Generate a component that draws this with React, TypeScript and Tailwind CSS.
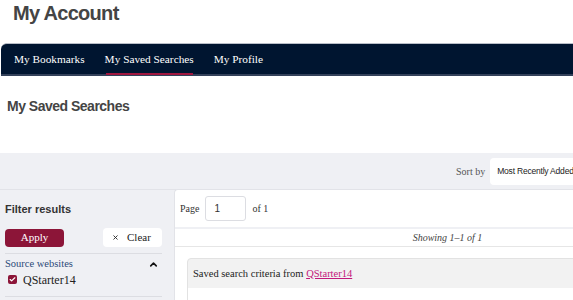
import { ChevronUp, Check, X } from 'lucide-react';

const serif = { fontFamily: '"Liberation Serif", "DejaVu Serif", serif' };

const tabs = ['My Bookmarks', 'My Saved Searches', 'My Profile'];

const App = () => {
  return (
    <div className="w-full overflow-hidden bg-white" style={{ fontFamily: '"Liberation Sans", Arial, sans-serif' }}>
      <div className="w-[720px]">
        <h1 className="px-[13px] text-[20px] font-bold leading-[26px] tracking-[-0.7px] text-[#444]">My Account</h1>

        {/* tabs */}
        <nav className="mt-[17px] ml-[1px] flex h-[33px] gap-[20px] rounded-tl-md border-t border-[#b9bec8] border-b-2 border-b-[#33415a] bg-[#001530] pl-[13px] pt-[1px]" style={serif}>
          {tabs.map((t, i) => (
            <div key={t} className="relative flex items-center text-[11.3px] text-white">
              {t}
              {i === 1 && <span className="absolute bottom-[-1px] left-[1px] right-[1px] h-[2px] bg-[#a1173f]" />}
            </div>
          ))}
        </nav>

        <h2 className="px-[7px] pt-[21px] text-[14px] font-bold leading-[18px] tracking-[-0.5px] text-[#444]">My Saved Searches</h2>

        <div className="mt-[38px] bg-[#eff0f4]">
          {/* sort bar */}
          <div className="flex h-[37px] items-center border-b border-[#e2e3e8] pl-[456px]">
            <span className="text-[10px] text-[#555]" style={serif}>Sort by</span>
            <div className="ml-[5px] flex h-[27px] flex-1 items-center rounded-l-sm bg-white pl-[7px] text-[8.5px] tracking-[-0.2px] text-[#222]">
              Most Recently Added
            </div>
          </div>

          <div className="flex">
            {/* sidebar */}
            <aside className="w-[174px] shrink-0 pl-[5px] pr-[12px]">
              <h3 className="pt-[12px] text-[11px] font-bold leading-[14px] text-[#333]">Filter results</h3>
              <div className="mt-[12px] flex items-center justify-between" style={serif}>
                <button className="h-[18px] w-[59px] rounded-sm bg-[#8c1538] text-[11px] text-white">Apply</button>
                <button className="flex h-[19px] w-[59px] items-center gap-[8px] rounded-sm bg-white pl-[9px] text-[11px] text-[#222]">
                  <X size={7} strokeWidth={3} />
                  Clear
                </button>
              </div>
              <div className="mt-[6px] border-t border-[#dcdde2] pt-[3px]">
                <div className="flex h-[14px] items-center justify-between pr-[3px]">
                  <span className="text-[10.5px] text-[#2b4a78]" style={serif}>Source websites</span>
                  <ChevronUp size={11} strokeWidth={3.5} className="text-[#111]" />
                </div>
                <label className="flex h-[17px] items-center gap-[6px] pl-[3px] text-[12px] text-[#222]" style={serif}>
                  <span className="flex h-[9px] w-[9px] items-center justify-center rounded-[2px] bg-[#8c1538]">
                    <Check size={7} strokeWidth={4} className="text-white" />
                  </span>
                  QStarter14
                </label>
              </div>
              <div className="mt-[8px] border-t border-[#dcdde2]" />
            </aside>

            {/* results */}
            <main className="mt-[-1px] flex-1 rounded-tl-sm border-l border-t border-[#e2e3e8] bg-white" style={serif}>
              <div className="flex h-[37px] items-center pl-[5px] text-[10px] text-[#333]">
                <span>Page</span>
                <input
                  readOnly
                  value="1"
                  className="ml-[6px] h-[25px] w-[41px] rounded-[3px] border border-[#dcdde2] pl-[8px] text-[10px]"
                  style={{ fontFamily: '"Liberation Sans", Arial, sans-serif' }}
                />
                <span className="ml-[6px]">of 1</span>
              </div>
              <div className="h-[2px] bg-[#eff0f4]" />
              <div className="flex h-[18px] items-center justify-center border-b border-[#e6e6e6] text-[10px] italic text-[#444]">
                Showing 1–1 of 1
              </div>
              <div className="px-[12px] pt-[11px]">
                <div className="rounded-t-sm border border-[#e2e2e2] bg-[#f2f2f2]">
                  <div className="flex h-[29px] items-center pl-[5px] text-[10.5px] text-[#222]">
                    Saved search criteria from&nbsp;
                    <a className="text-[#c2187c] underline">QStarter14</a>
                  </div>
                  <div className="flex h-[20px] items-end bg-white pl-[54px]">
                    <div className="h-[2px] w-[90px] rounded-t border-x border-t border-[#ddd]" />
                  </div>
                </div>
              </div>
            </main>
          </div>
        </div>
      </div>
    </div>
  );
};

export default App;
